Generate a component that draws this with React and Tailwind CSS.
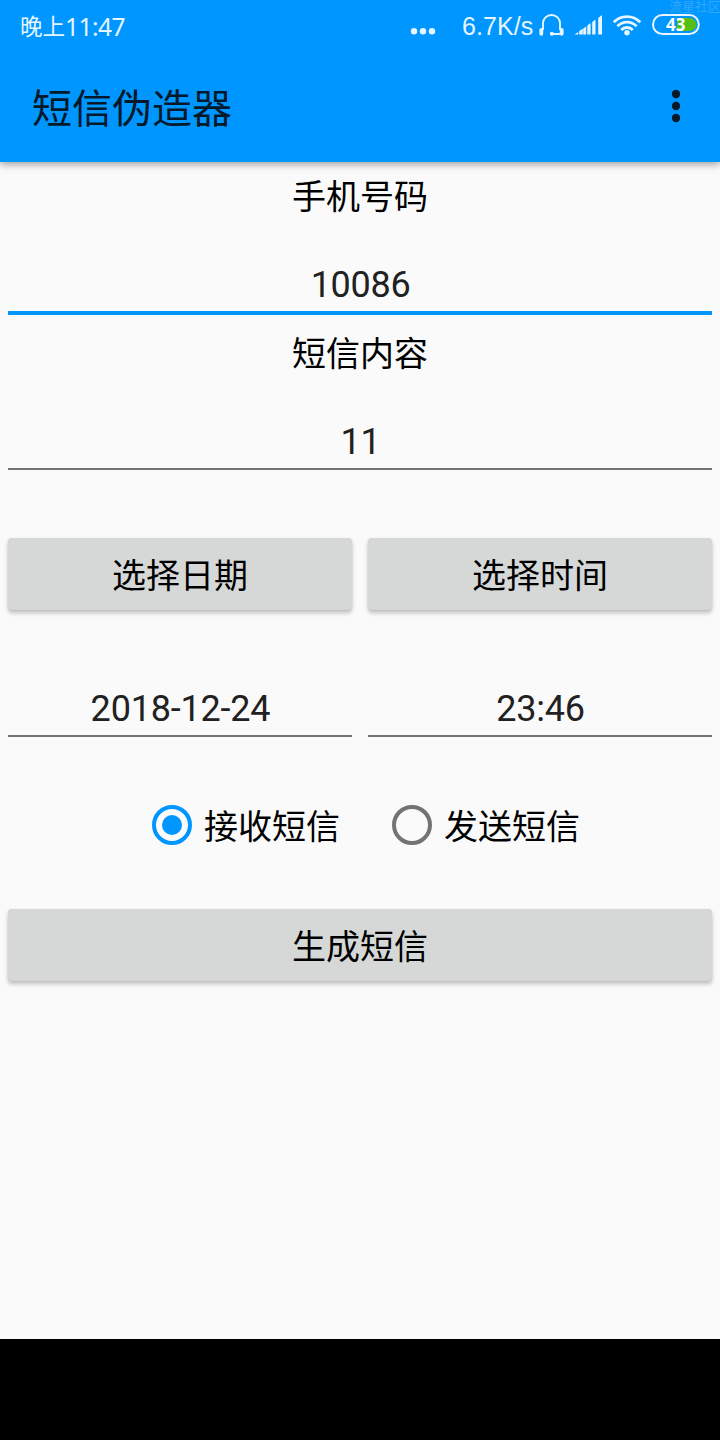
import { useState } from 'react';

const cjk = "font-['Roboto','Noto_Sans_CJK_SC',sans-serif]";

function StatusBar() {
  return (
    <div className="relative flex h-[50px] items-center text-[#e6f5ff]">
      <div className="flex flex-1 items-center pl-[20px] leading-[50px]">
        <span className="h-[50px] text-[22.5px] leading-[54px]">晚上</span>
        <span className="h-[50px] font-['Noto_Sans',sans-serif] text-[24.5px] leading-[53px] tracking-[-0.5px]">11:47</span>
      </div>
      <svg className="mr-[26px] h-[50px] w-[26px]" viewBox="0 0 26 50" fill="currentColor">
        <circle cx="4" cy="31.3" r="3.2" />
        <circle cx="13" cy="31.3" r="3.2" />
        <circle cx="22" cy="31.3" r="3.2" />
      </svg>
      <span className="h-[50px] w-[76px] font-['Liberation_Sans',sans-serif] text-[25px] leading-[53px] tracking-[0.1px]">6.7K/s</span>
      <svg className="h-[50px] w-[182px]" viewBox="538 0 182 50" fill="none" stroke="currentColor">
        <path d="M543 30V23a8.5 8 0 0 1 17 0v7M561 33l-2 1h-7" strokeWidth="1.9" />
        <path d="M541.3 29.8v4M561.7 29.8v4" strokeWidth="3.8" strokeLinecap="round" />
        <circle cx="551.8" cy="33.8" r="2" fill="currentColor" stroke="none" />
        <path d="M574.3 34.6l4-2.7v2.7zM579.2 31.1l3.6-2.4v5.9h-3.6zM583.2 28.4l3-2v8.2h-3zM587.3 25.4l3.3-2.4v11.6h-3.3zM592.2 22l3.3-2.4v15h-3.3zM598.2 17.9l3.8-2.8v19.5h-3.8z" fill="currentColor" stroke="none" />
        <path d="M613.7 22.3a18.5 18.5 0 0 1 26.6 0M617.4 26.3a13 13 0 0 1 19.2 0M621.2 30a8 8 0 0 1 11.6 0" strokeWidth="2.8" />
        <circle cx="627" cy="32.7" r="2.7" fill="currentColor" stroke="none" />
        <path d="M677 18h13a6.5 6.5 0 0 1 0 13H677z" fill="#55bf16" stroke="none" />
        <rect x="653" y="15" width="45.8" height="19" rx="9.5" strokeWidth="2" />
        <text x="675.8" y="31" textAnchor="middle" fill="#fff" stroke="none" className="font-['Noto_Sans',sans-serif] text-[17px] font-bold">43</text>
      </svg>
      <span className="absolute top-[-3px] left-[669px] w-[60px] text-[13px] leading-[19px] whitespace-nowrap text-[#33a6f8]">流星社区</span>
    </div>
  );
}

function Field({ value, focused }) {
  return (
    <div className={focused ? 'flex h-[60px] flex-1 flex-col border-b-4 border-[#0096ff]' : 'flex h-[60px] flex-1 flex-col border-b-2 border-[#737373]'}>
      <input
        className={
          focused
            ? 'h-[56px] w-full bg-transparent pt-[4px] pl-[1px] text-center text-[36px] tracking-[-0.3px] text-[#212121] outline-none'
            : 'h-[58px] w-full bg-transparent pt-[6px] pl-[1px] text-center text-[36px] tracking-[-0.2px] text-[#212121] outline-none'
        }
        defaultValue={value}
      />
    </div>
  );
}

function Button({ children }) {
  return (
    <button className="h-[72px] flex-1 rounded-[4px] bg-[#d6d8d7] pt-[4px] text-[34px] leading-[68px] text-black shadow-[0_3px_4px_rgba(0,0,0,0.24),0_0_1px_rgba(0,0,0,0.12)]">
      {children}
    </button>
  );
}

function Radio({ checked, onSelect, children }) {
  return (
    <button role="radio" aria-checked={checked} onClick={onSelect} className="flex h-[64px] w-[240px] items-center gap-[12px]">
      <svg className="size-[40px]" viewBox="0 0 40 40">
        <circle cx="20" cy="20" r="18" fill="none" strokeWidth="4" stroke={checked ? '#0096ff' : '#737373'} />
        {checked && <circle cx="20" cy="20" r="10" fill="#0096ff" />}
      </svg>
      <span className="pt-[4px] text-[34px] leading-[50px]">{children}</span>
    </button>
  );
}

export default function App() {
  const [kind, setKind] = useState('in');
  return (
    <div className={`flex h-[1440px] w-[720px] flex-col overflow-hidden bg-[#fafafa] text-black ${cjk}`}>
      <header className="z-10 h-[162px] bg-[#0096ff] shadow-[0_2px_8px_rgba(0,0,0,0.4)]">
        <StatusBar />
        <div className="flex h-[112px] items-center justify-between pr-[38px] pl-[32px] text-[#04192a]">
          <h1 className="h-[112px] text-[40px] leading-[120px]">短信伪造器</h1>
          <svg className="h-[112px] w-[12px]" viewBox="0 0 12 112" fill="currentColor">
            <circle cx="6" cy="44" r="4.2" />
            <circle cx="6" cy="56" r="4.2" />
            <circle cx="6" cy="68" r="4.2" />
          </svg>
        </div>
      </header>
      <main className="flex flex-1 flex-col px-[8px]">
        <label className="h-[93px] pt-[11px] text-center text-[34px] leading-[48px]">手机号码</label>
        <div className="flex"><Field value="10086" focused /></div>
        <label className="h-[95px] pt-[15px] text-center text-[34px] leading-[48px]">短信内容</label>
        <div className="flex"><Field value="11" /></div>
        <div className="mt-[68px] flex gap-[16px]">
          <Button>选择日期</Button>
          <Button>选择时间</Button>
        </div>
        <div className="mt-[67px] flex gap-[16px]">
          <Field value="2018-12-24" />
          <Field value="23:46" />
        </div>
        <div role="radiogroup" className="mt-[56px] flex pl-[144px]">
          <Radio checked={kind === 'in'} onSelect={() => setKind('in')}>接收短信</Radio>
          <Radio checked={kind === 'out'} onSelect={() => setKind('out')}>发送短信</Radio>
        </div>
        <div className="mt-[52px] flex">
          <Button>生成短信</Button>
        </div>
      </main>
      <footer className="h-[101px] bg-black" />
    </div>
  );
}
